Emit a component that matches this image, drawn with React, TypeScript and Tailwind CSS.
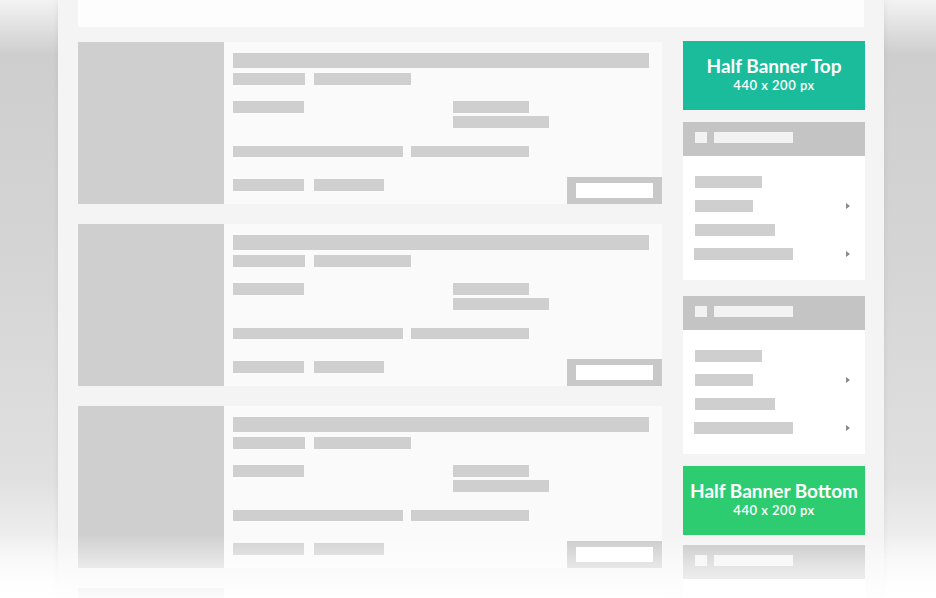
function Bar({ w, h = 12, className = "" }: { w: number; h?: number; className?: string }) {
  return <div className={`bg-[#cfcfcf] ${className}`} style={{ width: w, height: h }} />
}

function ListingCard() {
  return (
    <div className="flex h-[162px] shrink-0">
      <div className="w-[146px] bg-[#cfcfcf]" />
      <div className="flex flex-1 flex-col bg-[#fafafa] pl-[9px] pt-[11px]">
        <Bar w={416} h={15} />
        <div className="mt-[5px] flex gap-[9px]">
          <Bar w={72} />
          <Bar w={97} />
        </div>
        <div className="mt-4 flex">
          <Bar w={71} />
          <div className="ml-[149px] flex flex-col gap-[3px]">
            <Bar w={76} />
            <Bar w={96} />
          </div>
        </div>
        <div className="mt-[18px] flex gap-[8px]">
          <Bar w={170} h={11} />
          <Bar w={118} h={11} />
        </div>
        <div className="mt-auto flex items-end justify-between">
          <div className="mb-[13px] flex gap-[10px]">
            <Bar w={71} />
            <Bar w={70} />
          </div>
          <div className="h-[27px] w-[95px] border-x-[9px] border-y-[6px] border-[#c8c8c8] bg-white" />
        </div>
      </div>
    </div>
  )
}

function Banner({ title, color }: { title: string; color: string }) {
  return (
    <div
      className={`flex h-[69px] shrink-0 flex-col items-center justify-center pb-[4px] text-white ${color}`}
      style={{ fontFamily: "Lato, 'Open Sans', sans-serif" }}
    >
      <div className="text-[19px] font-bold leading-[22px]">{title}</div>
      <div className="text-[13px] font-semibold leading-[16px] tracking-[0.5px]">440 x 200 px</div>
    </div>
  )
}

function Arrow() {
  return <div className="mr-[15px] h-0 w-0 border-y-[3px] border-l-[4px] border-y-transparent border-l-[#8a8a8a]" />
}

function Widget() {
  return (
    <div className="shrink-0">
      <div className="flex h-[34px] items-start gap-[7px] bg-[#c4c4c4] pl-3 pt-[10px]">
        <div className="h-[11px] w-3 bg-[#f2f2f2]" />
        <div className="h-[11px] w-[79px] bg-[#f2f2f2]" />
      </div>
      <div className="flex h-[124px] flex-col gap-3 bg-white pl-3 pt-5">
        <Bar w={67} />
        <div className="flex items-center justify-between">
          <Bar w={58} />
          <Arrow />
        </div>
        <Bar w={80} />
        <div className="flex items-center justify-between">
          <Bar w={99} className="-ml-px" />
          <Arrow />
        </div>
      </div>
    </div>
  )
}

export default function App() {
  return (
    <div className="relative h-[598px] w-full overflow-hidden bg-[linear-gradient(to_bottom,#f3f3f3_0%,#cecece_9%,#d5d5d5_45%,#e0e0e0_80%,#fdfdfd_100%)]">
      <div className="ml-[58px] h-full w-[826px] bg-[#f4f4f4] pl-5 pr-[19px] shadow-[0_0_6px_rgba(0,0,0,0.08)]">
        <div className="h-[27px] w-[786px] bg-[#fdfdfd]" />
        <div className="mt-[14px] flex gap-[21px]">
          <div className="flex w-[584px] flex-col gap-5 pt-px">
            <ListingCard />
            <ListingCard />
            <ListingCard />
            <ListingCard />
          </div>
          <div className="flex w-[182px] flex-col">
            <Banner title="Half Banner Top" color="bg-[#1abc9c]" />
            <div className="mt-3">
              <Widget />
            </div>
            <div className="mt-4">
              <Widget />
            </div>
            <div className="mt-3">
              <Banner title="Half Banner Bottom" color="bg-[#2ecc71]" />
            </div>
            <div className="mt-[10px]">
              <Widget />
            </div>
          </div>
        </div>
      </div>
      {/* bottom fade */}
      <div className="pointer-events-none absolute inset-x-0 bottom-0 h-[64px] bg-[linear-gradient(to_bottom,rgba(255,255,255,0)_0%,rgba(255,255,255,0.55)_50%,rgba(255,255,255,0.92)_100%)]" />
    </div>
  )
}
